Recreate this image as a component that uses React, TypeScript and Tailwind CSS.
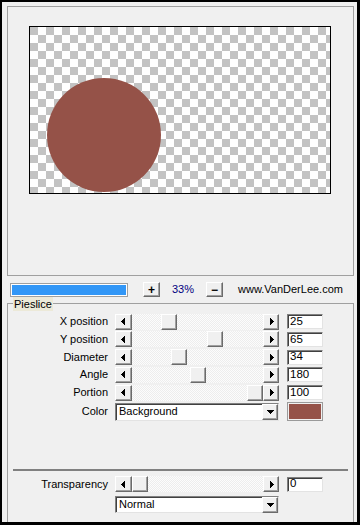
import React from "react";

const raised =
  "bg-[#f0f0f0] border border-t-white border-l-white border-r-[#6b6b6b] border-b-[#6b6b6b] shadow-[inset_-1px_-1px_0_#a0a0a0]";
const sunken =
  "bg-white border border-t-[#808080] border-l-[#808080] border-r-[#e3e3e3] border-b-[#e3e3e3] shadow-[inset_1px_1px_0_#404040]";

function Arrow({ dir }: { dir: "left" | "right" | "down" }) {
  if (dir === "left")
    return (
      <svg width="4" height="7" shapeRendering="crispEdges">
        <path d="M0 3h1v1H0z M1 2h1v3H1z M2 1h1v5H2z M3 0h1v7H3z" fill="#000" />
      </svg>
    );
  if (dir === "right")
    return (
      <svg width="4" height="7" shapeRendering="crispEdges">
        <path d="M3 3h1v1H3z M2 2h1v3H2z M1 1h1v5H1z M0 0h1v7H0z" fill="#000" />
      </svg>
    );
  return (
    <svg width="7" height="4" shapeRendering="crispEdges">
      <path d="M0 0h7v1H0z M1 1h5v1H1z M2 2h3v1H2z M3 3h1v1H3z" fill="#000" />
    </svg>
  );
}

function Slider({ value, max }: { value: number; max: number }) {
  const left = (value / max) * 115;
  return (
    <div className="flex h-[16px]">
      <div className={`${raised} w-[17px] h-full flex items-center justify-center pr-[2px]`}>
        <Arrow dir="left" />
      </div>
      <div className="relative w-[131px] h-full [background-image:repeating-conic-gradient(#ededed_0_25%,#fcfcfc_0_50%)] [background-size:2px_2px]">
        <div className={`${raised} absolute top-0 h-full w-[16px]`} style={{ left }} />
      </div>
      <div className={`${raised} w-[16px] h-full flex items-center justify-center pl-[1px]`}>
        <Arrow dir="right" />
      </div>
    </div>
  );
}

function Input({ value }: { value: string }) {
  return (
    <div className={`${sunken} ml-[8px] w-[36px] h-[15px] pl-[2px] flex items-center text-[11.5px]`}>
      {value}
    </div>
  );
}

function SliderRow({ label, value, max }: { label: string; value: number; max: number }) {
  return (
    <div className="flex items-center h-[16px]">
      <div className="w-[100px] text-right">{label}</div>
      <div className="ml-[7px]">
        <Slider value={value} max={max} />
      </div>
      <Input value={String(value)} />
    </div>
  );
}

function Dropdown({ text, h }: { text: string; h: string }) {
  return (
    <div className={`${sunken} w-[164px] ${h} flex items-center`}>
      <span className="flex-1 pl-[3px]">{text}</span>
      <div className={`${raised} w-[16px] h-[16px] flex items-center justify-center`}>
        <Arrow dir="down" />
      </div>
    </div>
  );
}

export default function App() {
  return (
    <div className="w-[360px] h-[525px] border-black border-t-2 border-l-2 border-r-[3px] border-b-[3px] bg-[#f0f0f0] flex flex-col font-['Liberation_Sans',Arial,sans-serif] text-[11px] text-black leading-none">
      <div className="ml-[5px] mt-[4px] w-[347px] h-[270px] border border-[#a0a0a0] pl-[21px] pt-[19px] shrink-0">
        <div className="relative w-[302px] h-[168px] border border-black [background-image:repeating-conic-gradient(#fff_0_25%,#c3c3c3_0_50%)] [background-size:16px_16px]">
          <svg className="absolute left-0 top-0" width="300" height="166">
            <circle cx="74" cy="108" r="57" fill="#955248" />
          </svg>
        </div>
      </div>

      <div className="mt-[6px] h-[15px] flex items-center shrink-0">
        <div className="ml-[8px] w-[118px] h-[14px] border border-[#a0a0a0] p-[1px] bg-white">
          <div className="w-full h-full bg-[#3297f7]" />
        </div>
        <div className={`${raised} ml-[15px] w-[17px] h-[15px] flex items-center justify-center font-bold text-[12px]`}>+</div>
        <div className="w-[46px] text-center text-[#000080]">33%</div>
        <div className={`${raised} w-[17px] h-[15px] flex items-center justify-center font-bold text-[12px]`}>−</div>
        <div className="ml-[15px]">www.VanDerLee.com</div>
      </div>

      <div className="relative mt-[6px] ml-[5px] w-[347px] flex-1 border-t border-l border-r border-[#a0a0a0] pt-[9.5px] flex flex-col">
        <div className="absolute left-[5px] -top-[7px] h-[14px] px-[1px] bg-[#ece9d8] flex items-center">Pieslice</div>
        <div className="flex flex-col gap-[1.75px]">
          <SliderRow label="X position" value={25} max={100} />
          <SliderRow label="Y position" value={65} max={100} />
          <SliderRow label="Diameter" value={34} max={100} />
          <SliderRow label="Angle" value={180} max={360} />
          <SliderRow label="Portion" value={100} max={100} />
          <div className="flex items-center h-[19px]">
            <div className="w-[100px] text-right">Color</div>
            <div className="ml-[7px]">
              <Dropdown text="Background" h="h-[18px]" />
            </div>
            <div className="ml-[8px] w-[36px] h-[19px] border border-[#9a9a9a] p-[1px] bg-[#f0f0f0]">
              <div className="w-full h-full bg-[#955248]" />
            </div>
          </div>
        </div>
        <div className="mt-[47.75px] mx-[5px] h-[2px] bg-[#808080]" />
        <div className="mt-[5px]">
          <SliderRow label="Transparency" value={0} max={100} />
        </div>
        <div className="mt-[4px] ml-[107px]">
          <Dropdown text="Normal" h="h-[17px]" />
        </div>
      </div>
    </div>
  );
}
